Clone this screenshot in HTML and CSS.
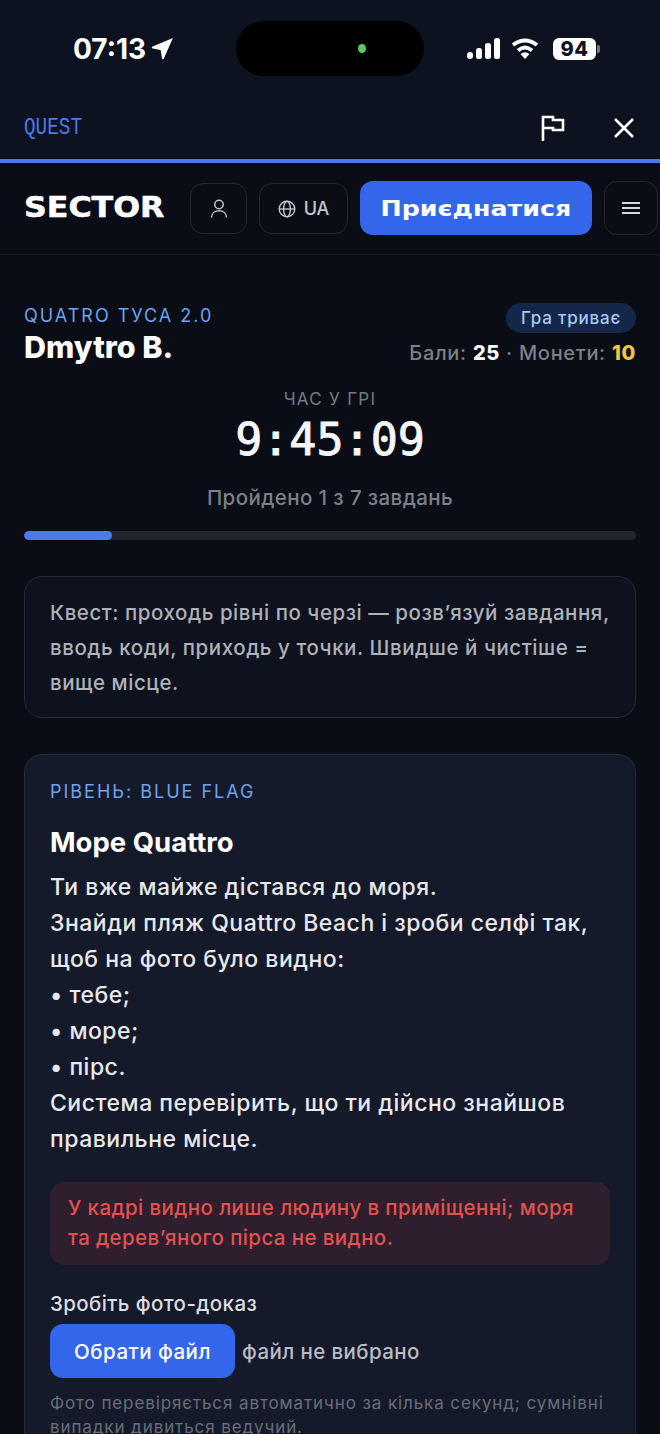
FILE: index.html
```html
<!DOCTYPE html>
<html lang="uk">
<head>
    <meta charset="UTF-8">
    <meta name="viewport" content="width=device-width, initial-scale=1.0">
    <title>Quest</title>
    <link rel="stylesheet" href="styles.css">
</head>
<body>
    <div class="browser-top">
        <div class="status-bar">
            <div class="status-time">
                <span>07:13</span>
                <svg width="23" height="23" viewBox="0 0 21 21"><path d="M20 1 L11.5 20 Q10.6 21 10 19.5 L8.8 11.8 L1.5 10.6 Q0 10 1 9 Z" fill="#fff"/></svg>
            </div>
            <div class="island"><span class="island-dot"></span></div>
            <div class="status-right">
                <svg class="signal" width="33" height="21" viewBox="0 0 33 21" fill="#fff"><rect x="0" y="14" width="6" height="7" rx="3"/><rect x="9" y="10" width="6" height="11" rx="2.5"/><rect x="18" y="5" width="6" height="16" rx="2.5"/><rect x="27" y="0" width="6" height="21" rx="2.5"/></svg>
                <svg class="wifi" width="28" height="21" viewBox="0 0 28 21" fill="none" stroke="#fff" stroke-width="4"><path d="M2 7 Q14 -2 26 7"/><path d="M7 12.5 Q14 6.5 21 12.5"/><path d="M14 21 L9.5 16 Q14 12.5 18.5 16 Z" fill="#fff" stroke="none"/></svg>
                <div class="battery"><span class="battery-level">94</span><span class="battery-cap"></span></div>
            </div>
        </div>
        <div class="quest-bar">
            <span class="quest-title">QUEST</span>
            <div class="quest-actions">
                <svg width="26" height="26" viewBox="0 0 26 26" fill="none" stroke="#fff" stroke-width="2.6"><path d="M3 26 V2 H13 V5 H23 V15 H13 V13 H3"/></svg>
                <svg width="24" height="24" viewBox="0 0 24 24" fill="none" stroke="#fff" stroke-width="2.6"><path d="M3 3 L21 21 M21 3 L3 21"/></svg>
            </div>
        </div>
    </div>

    <header class="site-header">
        <div class="logo"><span>SECTOR</span></div>
        <button class="icon-btn user-btn">
            <svg width="18" height="20" viewBox="0 0 18 20" fill="none" stroke="#c3c6cc" stroke-width="1.5"><circle cx="9" cy="5.5" r="4.2"/><path d="M1.5 18.5 C1.5 14 5 11.8 9 11.8 C13 11.8 16.5 14 16.5 18.5"/></svg>
        </button>
        <button class="icon-btn lang-btn">
            <svg width="18" height="18" viewBox="0 0 18 18" fill="none" stroke="#c3c6cc" stroke-width="1.4"><circle cx="9" cy="9" r="7.8"/><ellipse cx="9" cy="9" rx="3.4" ry="7.8"/><path d="M1.2 9 H16.8"/></svg>
            <span>UA</span>
        </button>
        <button class="join-btn"><span>Приєднатися</span></button>
        <button class="icon-btn menu-btn">
            <svg width="20" height="14" viewBox="0 0 20 14" fill="none" stroke="#d5d7db" stroke-width="2"><path d="M1 2 H19 M1 7 H19 M1 12 H19"/></svg>
        </button>
    </header>

    <main class="page">
        <div class="player-row">
            <div>
                <div class="game-name">QUATRO ТУСА 2.0</div>
                <div class="player-name">Dmytro B.</div>
            </div>
            <div class="player-stats">
                <span class="badge">Гра триває</span>
                <div class="scores">Бали: <b>25</b> · Монети: <b class="coins">10</b></div>
            </div>
        </div>

        <div class="timer-block">
            <div class="timer-label">ЧАС У ГРІ</div>
            <div class="timer">9:45:09</div>
            <div class="timer-progress">Пройдено 1 з 7 завдань</div>
        </div>

        <div class="progress"><div class="progress-fill" style="width: 14.3%"></div></div>

        <div class="card intro">Квест: проходь рівні по черзі — розв’язуй завдання, вводь коди, приходь у точки. Швидше й чистіше = вище місце.</div>

        <section class="card task">
            <div class="task-level">РІВЕНЬ: BLUE FLAG</div>
            <h2>Море Quattro</h2>
            <p class="task-text">Ти вже майже дістався до моря.<br>Знайди пляж Quattro Beach і зроби селфі так, щоб на фото було видно:<br>• тебе;<br>• море;<br>• пірс.<br>Система перевірить, що ти дійсно знайшов правильне місце.</p>
            <div class="error-box">У кадрі видно лише людину в приміщенні; моря та дерев’яного пірса не видно.</div>
            <div class="upload-label">Зробіть фото-доказ</div>
            <div class="upload-row">
                <button class="file-btn">Обрати файл</button>
                <span class="file-name">файл не вибрано</span>
            </div>
            <p class="hint">Фото перевіряється автоматично за кілька секунд; сумнівні випадки дивиться ведучий.</p>
        </section>
    </main>
</body>
</html>
```

FILE: styles.css
```css
* {
    box-sizing: border-box;
}

html, body {
    margin: 0;
    height: 1434px;
    overflow: hidden;
}

body {
    font-family: Inter, "Noto Sans", sans-serif;
    background-color: #0a0d16;
    color: #fff;
}

button {
    font-family: inherit;
    cursor: pointer;
}

.browser-top {
    height: 163px;
    background-color: #0d1220;
    border-bottom: 4px solid #4a7ae8;
}

.status-bar {
    height: 96px;
    padding: 21px 60px 0 73px;
    display: flex;
    justify-content: space-between;
    align-items: flex-start;
    position: relative;
}

.status-time {
    display: flex;
    align-items: center;
    gap: 5px;
    height: 55px;
    font-size: 28px;
    font-weight: 700;
}

.status-right {
    display: flex;
    align-items: center;
    height: 55px;
}

.wifi {
    margin: 0 14px 0 11px;
}

.island {
    position: absolute;
    left: 236px;
    top: 21px;
    width: 188px;
    height: 55px;
    border-radius: 28px;
    background-color: #000;
}

.island-dot {
    position: absolute;
    left: 122px;
    top: 23px;
    width: 8px;
    height: 9px;
    border-radius: 50%;
    background-color: #5fc95f;
}

.battery {
    display: flex;
    align-items: center;
    gap: 1px;
}

.battery-level {
    width: 43px;
    height: 22px;
    border-radius: 6px;
    background-color: #fff;
    color: #0d1220;
    font-size: 20px;
    font-weight: 800;
    letter-spacing: 0.5px;
    line-height: 22px;
    text-align: center;
}

.battery-cap {
    width: 3px;
    height: 8px;
    border-radius: 0 2px 2px 0;
    background-color: #777;
}

.quest-bar {
    height: 63px;
    padding: 0 24px;
    display: flex;
    justify-content: space-between;
    align-items: center;
}

.quest-title {
    font-family: "Liberation Mono", monospace;
    font-size: 23px;
    color: #4a7ae8;
    transform-origin: left center;
    transform: scaleX(0.84);
}

.quest-actions {
    display: flex;
    align-items: center;
    gap: 46px;
}

.site-header {
    height: 92px;
    padding: 18px 0 0 24px;
    display: flex;
    align-items: flex-start;
    border-bottom: 1px solid #1a1e2a;
    background-color: #0a0d16;
}

.logo {
    width: 166px;
    height: 54px;
    line-height: 54px;
    font-family: "DejaVu Sans", sans-serif;
    font-size: 28px;
    font-weight: 700;
}

.logo span {
    display: inline-block;
    transform-origin: left center;
    transform: scaleX(1.13);
    -webkit-text-stroke: 0.5px #fff;
}

.icon-btn {
    height: 51px;
    margin-top: 2px;
    display: flex;
    align-items: center;
    justify-content: center;
    border: 1px solid #22262f;
    border-radius: 13px;
    background: transparent;
    color: #c3c6cc;
    padding: 0;
}

.user-btn {
    width: 57px;
}

.lang-btn {
    width: 89px;
    margin-left: 12px;
    gap: 8px;
    font-size: 18px;
    font-weight: 500;
}

.join-btn {
    width: 232px;
    height: 54px;
    margin-left: 12px;
    border: none;
    border-radius: 13px;
    background-color: #3366ea;
    color: #fff;
    font-family: "DejaVu Sans", sans-serif;
    font-size: 22px;
    font-weight: 700;
    flex-shrink: 0;
}

.join-btn span {
    display: inline-block;
    transform: scaleX(1.15);
}

.menu-btn {
    width: 54px;
    height: 54px;
    margin: 0 0 0 12px;
    flex-shrink: 0;
}

.page {
    padding: 48px 24px 0;
}

.player-row {
    display: flex;
    justify-content: space-between;
    align-items: flex-start;
}

.game-name {
    margin-top: 2px;
    font-size: 18px;
    letter-spacing: 2px;
    color: #6ea2ec;
    line-height: 22px;
}

.player-name {
    font-size: 30.5px;
    font-weight: 800;
    line-height: 34px;
    margin-top: 3px;
}

.player-stats {
    text-align: right;
}

.badge {
    display: inline-block;
    height: 30px;
    line-height: 30px;
    padding: 0 15px;
    border-radius: 15px;
    background-color: #14264a;
    color: #a9c8f5;
    font-size: 17px;
    font-weight: 500;
    letter-spacing: 0.8px;
}

.scores {
    margin-top: 5px;
    font-size: 20px;
    font-weight: 500;
    letter-spacing: 0.7px;
    line-height: 30px;
    color: #7d8087;
}

.scores b {
    color: #fff;
    font-weight: 800;
}

.scores .coins {
    color: #f4c53d;
}

.timer-block {
    text-align: center;
    margin-top: 21px;
}

.timer-label {
    font-size: 17px;
    letter-spacing: 1.3px;
    color: #777a81;
    line-height: 20px;
}

.timer {
    font-family: "DejaVu Sans Mono", monospace;
    font-size: 45px;
    line-height: 56px;
    color: #f5f6f8;
    -webkit-text-stroke: 0.9px #f5f6f8;
    margin-top: 3px;
}

.timer-progress {
    font-size: 20.5px;
    font-weight: 500;
    letter-spacing: 0.4px;
    line-height: 26px;
    color: #7d8087;
    margin-top: 17px;
}

.progress {
    height: 9px;
    margin-top: 20px;
    border-radius: 5px;
    background-color: #22252f;
    overflow: hidden;
}

.progress-fill {
    height: 100%;
    border-radius: 5px;
    background-color: #4a7ae8;
}

.card {
    border: 1px solid #272b38;
    border-radius: 18px;
}

.intro {
    margin-top: 36px;
    padding: 18px 18px 17px 25px;
    background-color: #0e121e;
    font-size: 20.5px;
    font-weight: 500;
    letter-spacing: 0.55px;
    line-height: 35px;
    color: #aeb1b8;
}

.task {
    margin-top: 36px;
    padding: 26px 25px 0;
    height: 800px;
    background-color: #151a2a;
}

.task-level {
    font-size: 18px;
    letter-spacing: 2px;
    color: #6ea2ec;
    line-height: 22px;
}

.task h2 {
    margin: 22px 0 0;
    font-size: 27.5px;
    font-weight: 700;
    line-height: 34px;
}

.task-text {
    margin: 10px 0 0;
    font-size: 23px;
    font-weight: 500;
    letter-spacing: 0.5px;
    line-height: 36px;
    color: #e8e9ec;
}

.error-box {
    margin-top: 25px;
    padding: 11px 18px 12px;
    border-radius: 14px;
    background-color: #2f1e2d;
    color: #e0524f;
    font-size: 20.5px;
    font-weight: 500;
    letter-spacing: 0.4px;
    line-height: 30px;
}

.upload-label {
    margin-top: 26px;
    font-size: 20.5px;
    font-weight: 500;
    letter-spacing: 0.4px;
    line-height: 26px;
    color: #dcdde1;
}

.upload-row {
    margin-top: 7px;
    display: flex;
    align-items: center;
    gap: 7px;
}

.file-btn {
    width: 185px;
    height: 54px;
    border: none;
    border-radius: 13px;
    background-color: #3366ea;
    color: #fff;
    font-size: 20.5px;
    font-weight: 500;
    letter-spacing: 0.5px;
    padding: 0;
}

.file-name {
    font-size: 20.5px;
    font-weight: 500;
    letter-spacing: 0.4px;
    color: #b9bbc2;
}

.hint {
    margin: 13px 0 0;
    font-size: 17px;
    line-height: 24px;
    letter-spacing: 0.9px;
    color: #696d78;
}
```
